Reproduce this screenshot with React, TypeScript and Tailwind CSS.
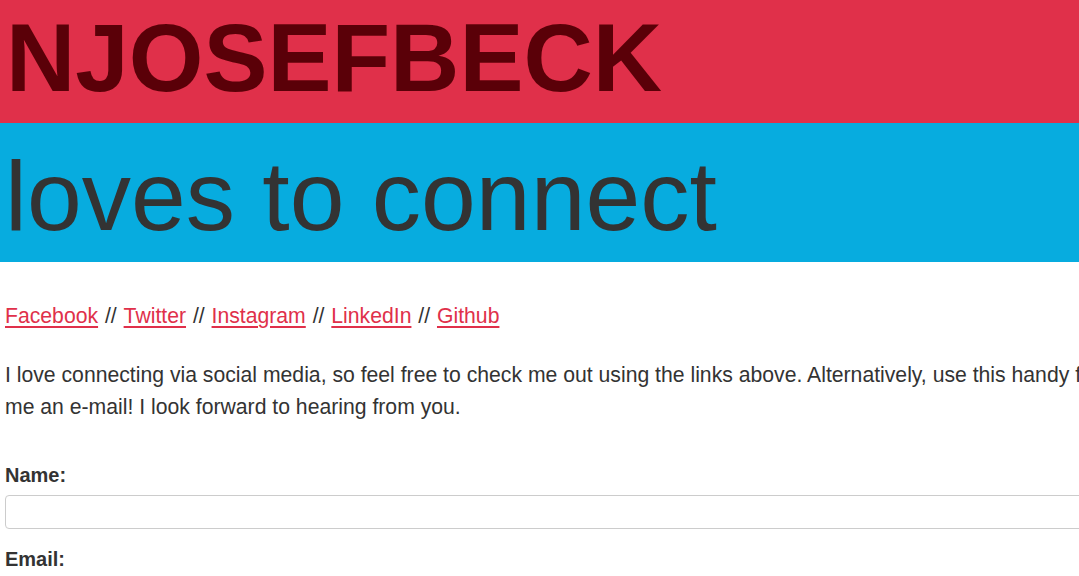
export default function App() {
  const links = ['Facebook', 'Twitter', 'Instagram', 'LinkedIn', 'Github']

  return (
    <div className="w-full h-[576px] overflow-hidden bg-white text-[#333333] font-['Liberation_Sans',Arial,sans-serif]">
      <div className="w-[1260px]">
        {/* Titel */}
        <header className="h-[123px] bg-[#e0304a] pt-[10px] pl-[6px]">
          <h1 className="text-[96px] leading-none font-bold text-[#5a0008]">NJOSEFBECK</h1>
        </header>
        <div className="h-[139px] bg-[#07acdf] pt-[24px] pl-[5px]">
          <h2 className="text-[98.5px] leading-none text-[#333333]">loves to connect</h2>
        </div>

        {/* Inhalt */}
        <main className="pl-[5px] pr-[40px] text-[21.2px] leading-[32px]">
          <p className="mt-[38px]">
            {links.map((l, i) => (
              <span key={l}>
                <a href="#" className="text-[#e0304a] underline underline-offset-[3px]">
                  {l}
                </a>
                {i < links.length - 1 && <span className="px-[1px]"> // </span>}
              </span>
            ))}
          </p>
          <p className="mt-[27px]">
            I love connecting via social media, so feel free to check me out using the links above. Alternatively, use
            this handy form to send me an e-mail! I look forward to hearing from you.
          </p>

          <form className="mt-[36px]">
            <label className="block font-bold text-[20px]">Name:</label>
            <input type="text" className="block mt-[4px] w-full h-[34px] border border-[#cccccc] rounded-[4px]" />
            <label className="block font-bold text-[20px] mt-[14px]">Email:</label>
            <input type="text" className="block mt-[4px] w-full h-[34px] border border-[#cccccc] rounded-[4px]" />
          </form>
        </main>
      </div>
    </div>
  )
}
